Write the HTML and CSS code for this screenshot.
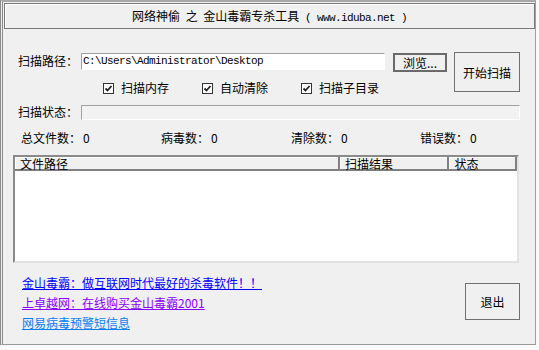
FILE: index.html
```html
<!DOCTYPE html>
<html lang="zh-CN">
<head>
    <meta charset="UTF-8">
    <meta name="viewport" content="width=device-width, initial-scale=1.0">
    <title>金山毒霸专杀工具</title>
    <link rel="stylesheet" href="styles.css">
</head>
<body>
    <div class="window">
        <div class="title">网络神偷 之 金山毒霸专杀工具 <span class="latin">( www.iduba.net )</span></div>
        <div class="content">
            <div class="scan-top">
                <div class="scan-fields">
                    <div class="path-row">
                        <label class="field-label">扫描路径：</label>
                        <div class="textbox">C:\Users\Administrator\Desktop</div>
                        <button class="browse">浏览...</button>
                    </div>
                    <div class="options">
                        <label class="check">
                            <svg width="11" height="11" viewBox="0 0 11 11"><rect x="0.5" y="0.5" width="10" height="10" fill="#fff" stroke="#333"/><polyline points="2.5,5.5 4.5,7.5 8.5,3" fill="none" stroke="#222" stroke-width="1.8"/></svg>
                            扫描内存
                        </label>
                        <label class="check">
                            <svg width="11" height="11" viewBox="0 0 11 11"><rect x="0.5" y="0.5" width="10" height="10" fill="#fff" stroke="#333"/><polyline points="2.5,5.5 4.5,7.5 8.5,3" fill="none" stroke="#222" stroke-width="1.8"/></svg>
                            自动清除
                        </label>
                        <label class="check">
                            <svg width="11" height="11" viewBox="0 0 11 11"><rect x="0.5" y="0.5" width="10" height="10" fill="#fff" stroke="#333"/><polyline points="2.5,5.5 4.5,7.5 8.5,3" fill="none" stroke="#222" stroke-width="1.8"/></svg>
                            扫描子目录
                        </label>
                    </div>
                </div>
                <button class="start">开始扫描</button>
            </div>

            <div class="status-row">
                <label class="field-label">扫描状态：</label>
                <div class="progress"></div>
            </div>

            <div class="stats">
                <span>总文件数：<b>0</b></span>
                <span>病毒数：<b>0</b></span>
                <span>清除数：<b>0</b></span>
                <span>错误数：<b>0</b></span>
            </div>

            <div class="list">
                <div class="list-header">
                    <div class="col col-path">文件路径</div>
                    <div class="col col-result">扫描结果</div>
                    <div class="col col-state">状态</div>
                </div>
                <div class="list-body"></div>
            </div>

            <div class="bottom">
                <div class="links">
                    <a href="#" class="link-main">金山毒霸：做互联网时代最好的杀毒软件！！</a>
                    <a href="#" class="link-visited">上卓越网：在线购买金山毒霸2001</a>
                    <a href="#" class="link-hover">网易病毒预警短信息</a>
                </div>
                <button class="exit">退出</button>
            </div>
        </div>
    </div>
</body>
</html>
```

FILE: styles.css
```css
body {
    margin: 0;
    background-color: #fafafa;
    font-family: "Noto Sans CJK SC", "Liberation Sans", sans-serif;
    font-size: 12px;
    color: #000;
}
.window {
    width: 532px;
    height: 342px;
    background-color: #f0f0f0;
    border-left: 3px double #8a8a8a;
    border-right: 1px solid #a0a0a0;
    border-bottom: 1px solid #9a9a9a;
    border-top: 2px solid #a8a8a8;
    overflow: hidden;
}
.title {
    margin: 1px 0 0 1px;
    height: 24px;
    line-height: 24px;
    text-align: center;
    word-spacing: 3px;
    border: 1px solid #7a7a7a;
    box-shadow: inset 1px 1px #fff;
}
.latin {
    font-family: "Liberation Mono", monospace;
    font-size: 11px;
    letter-spacing: -0.6px;
    word-spacing: 0;
}
.content {
    padding: 0 15px;
}
.scan-top {
    display: flex;
    margin-top: 23px;
}
.scan-fields {
    width: 435px;
    padding-top: 1px;
}
.path-row {
    display: flex;
    align-items: flex-start;
}
.field-label {
    width: 63px;
    line-height: 16px;
}
.textbox {
    width: 301px;
    height: 15px;
    line-height: 15px;
    background-color: #fff;
    border: 1px solid;
    border-color: #a0a0a0 #fff #fff #a0a0a0;
    font-family: "Liberation Mono", monospace;
    font-size: 11px;
    letter-spacing: -0.6px;
    padding-left: 1px;
    overflow: hidden;
    white-space: nowrap;
}
button {
    font-family: "Noto Sans CJK SC", "Liberation Sans", sans-serif;
    font-size: 12px;
    background-color: #f0f0f0;
    color: #000;
    padding: 0;
}
.browse {
    width: 54px;
    height: 19px;
    margin-left: 8px;
    border: 2px solid #6a6a6a;
    line-height: 14px;
}
.start {
    width: 66px;
    height: 40px;
    margin-left: 1px;
    border: 1px solid #707070;
}
.options {
    display: flex;
    gap: 33px;
    margin-top: 9px;
    padding-left: 85px;
}
.check {
    display: flex;
    align-items: center;
    gap: 7px;
    line-height: 14px;
}
.status-row {
    display: flex;
    align-items: center;
    margin-top: 9px;
}
.progress {
    flex: 1;
    height: 13px;
    background-color: #f2f2f2;
    border: 1px solid;
    border-color: #a0a0a0 #fff #fff #a0a0a0;
}
.stats {
    display: grid;
    grid-template-columns: 140px 130px 129px 1fr;
    padding-left: 3px;
    margin-top: 11px;
    line-height: 14px;
}
.stats b {
    font-weight: normal;
    margin-left: 2px;
}
.list {
    margin: 10px 0 0 -5px;
    width: 502px;
    height: 104px;
    border: 2px solid;
    border-color: #8a8a8a #e2e2e2 #e2e2e2 #8a8a8a;
    background-color: #fff;
}
.list-header {
    display: flex;
    height: 14px;
    line-height: 14px;
    background-color: #f0f0f0;
}
.col {
    padding-left: 5px;
    border-right: 2px solid #808080;
    border-bottom: 2px solid #808080;
    box-shadow: inset 1px 1px #fff;
}
.col-path {
    width: 320px;
}
.col-result {
    width: 103px;
}
.col-state {
    width: 61px;
}
.bottom {
    display: flex;
    justify-content: space-between;
    align-items: flex-start;
}
.links {
    display: flex;
    flex-direction: column;
    padding-left: 4px;
    margin-top: 10px;
    line-height: 20px;
}
.links a {
    text-decoration: underline;
    align-self: flex-start;
}
.link-main {
    color: #0000ff;
}
.link-visited {
    color: #8a00ff;
}
.link-hover {
    color: #0a7ef0;
}
.exit {
    width: 55px;
    height: 37px;
    margin-top: 20px;
    border: 1px solid #707070;
}
```
